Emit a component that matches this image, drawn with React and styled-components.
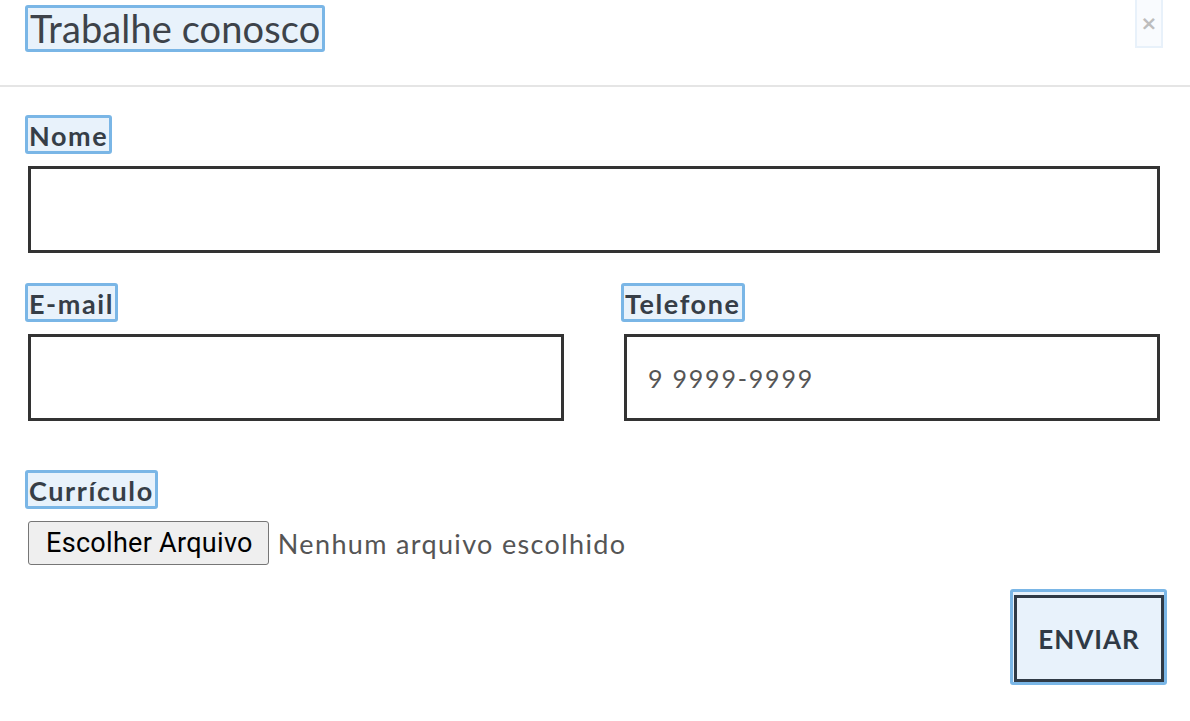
import styled, { createGlobalStyle, css } from 'styled-components';

const Global = createGlobalStyle`
  html, body {
    margin: 0;
    padding: 0;
    background: #fff;
  }
  body {
    font-family: Lato, "Open Sans", sans-serif;
    color: #333;
  }
`;

const highlight = css`
  border: 3px solid #7ab6e6;
  border-radius: 3px;
  background: #e8f2fb;
`;

const Modal = styled.div`
  width: 1190px;
  min-height: 721px;
`;

const Header = styled.div`
  display: flex;
  justify-content: space-between;
  align-items: flex-start;
  height: 87px;
  padding: 5px 27px 0 25px;
  box-sizing: border-box;
  border-bottom: 2px solid #e5e5e5;
`;

const Title = styled.h4`
  ${highlight};
  margin: 0;
  padding: 0 2px;
  height: 47px;
  box-sizing: border-box;
  font-size: 38px;
  font-weight: 400;
  line-height: 41px;
  color: #3d434a;
  letter-spacing: 0.1px;
`;

const Close = styled.button`
  margin-top: -5px;
  width: 28px;
  height: 48px;
  border: 2px solid #e8f1fa;
  border-top: none;
  background: #f9fbfe;
  color: #bdbdbd;
  font-family: "DejaVu Sans", sans-serif;
  font-size: 20px;
  font-weight: bold;
  padding: 0;
  line-height: 1;
`;

const Body = styled.form`
  padding: 28px 30px 0 28px;
`;

const Row = styled.div`
  display: grid;
  grid-template-columns: ${p => (p.$cols === 2 ? '1fr 1fr' : '1fr')};
  column-gap: 60px;
  margin-bottom: ${p => p.$gap || 30}px;
`;

const Field = styled.div`
  display: flex;
  flex-direction: column;
  align-items: flex-start;
`;

const Label = styled.label`
  ${highlight};
  margin-left: -3px;
  padding: 0 1px;
  height: 39px;
  box-sizing: border-box;
  font-size: 27px;
  font-weight: 700;
  line-height: 35px;
  letter-spacing: 1.6px;
  color: #363e47;
`;

const Input = styled.input`
  margin-top: 12px;
  align-self: stretch;
  height: 87px;
  box-sizing: border-box;
  border: 3px solid #333;
  padding: 0 21px;
  font-family: Lato, sans-serif;
  font-size: 25px;
  letter-spacing: 1.8px;
  color: #333;
  outline: none;
  &::placeholder {
    color: #555;
  }
`;

const FileRow = styled.div`
  display: flex;
  align-items: center;
  gap: 9px;
  margin-top: 12px;
`;

const FileButton = styled.button`
  height: 44px;
  padding: 0 15px 0 17px;
  border: 1px solid #767676;
  border-radius: 3px;
  background: #efefef;
  color: #000;
  font-family: Roboto, "Liberation Sans", sans-serif;
  font-size: 27px;
  letter-spacing: 0.3px;
`;

const FileName = styled.span`
  font-size: 27px;
  letter-spacing: 1.35px;
  color: #555;
`;

const Actions = styled.div`
  display: flex;
  justify-content: flex-end;
  margin-top: 24px;
  margin-right: -7px;
`;

const SubmitWrap = styled.div`
  ${highlight};
  padding: 3px 0 0 1px;
`;

const Submit = styled.button`
  width: 150px;
  height: 87px;
  border: 3px solid #2f3a46;
  background: #e8f2fb;
  font-family: Lato, sans-serif;
  font-size: 26px;
  font-weight: 700;
  letter-spacing: 1px;
  color: #2f3a46;
`;

export default function App() {
  return (
    <>
      <Global />
      <Modal>
        <Header>
          <Title>Trabalhe conosco</Title>
          <Close type="button" aria-label="Fechar">×</Close>
        </Header>
        <Body onSubmit={e => e.preventDefault()}>
          <Row>
            <Field>
              <Label htmlFor="nome">Nome</Label>
              <Input id="nome" type="text" />
            </Field>
          </Row>
          <Row $cols={2} $gap={49}>
            <Field>
              <Label htmlFor="email">E-mail</Label>
              <Input id="email" type="email" />
            </Field>
            <Field>
              <Label htmlFor="telefone">Telefone</Label>
              <Input id="telefone" type="tel" placeholder="9 9999-9999" />
            </Field>
          </Row>
          <Field>
            <Label htmlFor="curriculo">Currículo</Label>
            <FileRow>
              <FileButton type="button" id="curriculo">Escolher Arquivo</FileButton>
              <FileName>Nenhum arquivo escolhido</FileName>
            </FileRow>
          </Field>
          <Actions>
            <SubmitWrap>
              <Submit type="submit">ENVIAR</Submit>
            </SubmitWrap>
          </Actions>
        </Body>
      </Modal>
    </>
  );
}
